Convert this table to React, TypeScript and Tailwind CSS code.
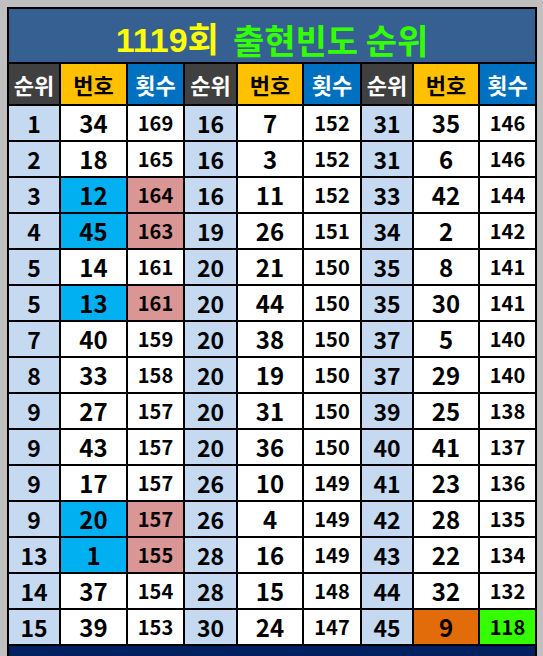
import React from 'react';

type Row = { rank: number; num: number; count: number; hl?: boolean; last?: boolean };

const groups: Row[][] = [
  [
    { rank: 1, num: 34, count: 169 },
    { rank: 2, num: 18, count: 165 },
    { rank: 3, num: 12, count: 164, hl: true },
    { rank: 4, num: 45, count: 163, hl: true },
    { rank: 5, num: 14, count: 161 },
    { rank: 5, num: 13, count: 161, hl: true },
    { rank: 7, num: 40, count: 159 },
    { rank: 8, num: 33, count: 158 },
    { rank: 9, num: 27, count: 157 },
    { rank: 9, num: 43, count: 157 },
    { rank: 9, num: 17, count: 157 },
    { rank: 9, num: 20, count: 157, hl: true },
    { rank: 13, num: 1, count: 155, hl: true },
    { rank: 14, num: 37, count: 154 },
    { rank: 15, num: 39, count: 153 },
  ],
  [
    { rank: 16, num: 7, count: 152 },
    { rank: 16, num: 3, count: 152 },
    { rank: 16, num: 11, count: 152 },
    { rank: 19, num: 26, count: 151 },
    { rank: 20, num: 21, count: 150 },
    { rank: 20, num: 44, count: 150 },
    { rank: 20, num: 38, count: 150 },
    { rank: 20, num: 19, count: 150 },
    { rank: 20, num: 31, count: 150 },
    { rank: 20, num: 36, count: 150 },
    { rank: 26, num: 10, count: 149 },
    { rank: 26, num: 4, count: 149 },
    { rank: 28, num: 16, count: 149 },
    { rank: 28, num: 15, count: 148 },
    { rank: 30, num: 24, count: 147 },
  ],
  [
    { rank: 31, num: 35, count: 146 },
    { rank: 31, num: 6, count: 146 },
    { rank: 33, num: 42, count: 144 },
    { rank: 34, num: 2, count: 142 },
    { rank: 35, num: 8, count: 141 },
    { rank: 35, num: 30, count: 141 },
    { rank: 37, num: 5, count: 140 },
    { rank: 37, num: 29, count: 140 },
    { rank: 39, num: 25, count: 138 },
    { rank: 40, num: 41, count: 137 },
    { rank: 41, num: 23, count: 136 },
    { rank: 42, num: 28, count: 135 },
    { rank: 43, num: 22, count: 134 },
    { rank: 44, num: 32, count: 132 },
    { rank: 45, num: 9, count: 118, last: true },
  ],
];

const font = { fontFamily: '"Noto Sans CJK KR", "Noto Sans", sans-serif' };

export default function App() {
  return (
    <div className="h-[656px] w-[543px] overflow-hidden bg-[#c0c0c0] pl-[7px] pt-[7px]" style={font}>
      <div className="w-[530px] border-2 border-b-0 border-black bg-black">
        {/* Title */}
        <div className="flex h-[53px] items-center justify-center bg-[#366092] pt-[9px] text-[34px] font-bold leading-none">
          <span className="text-[#ffff00]" style={{ fontFamily: '"Liberation Sans", "Noto Sans CJK KR", sans-serif' }}>
            1119회
          </span>
          <span className="ml-[14px] text-[#33ff00]">출현빈도 순위</span>
        </div>

        <div className="grid grid-cols-[50px_65px_55px_51px_64px_56px_50px_64px_55px] gap-[2px] pt-[2px]">
          {/* Header */}
          {[0, 1, 2].map((g) => (
            <React.Fragment key={g}>
              <div className="flex h-[40px] items-center justify-center bg-[#404040] text-[22px] font-bold text-white">순위</div>
              <div className="flex h-[40px] items-center justify-center bg-[#ffc000] text-[22px] font-bold text-black">번호</div>
              <div className="flex h-[40px] items-center justify-center bg-[#0070c0] text-[22px] font-bold text-white">횟수</div>
            </React.Fragment>
          ))}

          {/* Rows */}
          {groups[0].map((_, i) => (
            <React.Fragment key={i}>
              {groups.map((grp, g) => {
                const r = grp[i];
                return (
                  <React.Fragment key={g}>
                    <div className="flex h-[34px] items-center justify-center bg-[#c5d9f1] text-[23px] font-bold text-black">
                      {r.rank}
                    </div>
                    <div
                      className={`flex h-[34px] items-center justify-center text-[24px] font-bold text-black ${
                        r.last ? 'bg-[#e26b0a]' : r.hl ? 'bg-[#00b0f0]' : 'bg-white'
                      }`}
                    >
                      {r.num}
                    </div>
                    <div
                      className={`flex h-[34px] items-center justify-center text-[20px] font-bold text-black ${
                        r.last ? 'bg-[#33ff00]' : r.hl ? 'bg-[#da9694]' : 'bg-white'
                      }`}
                    >
                      {r.count}
                    </div>
                  </React.Fragment>
                );
              })}
            </React.Fragment>
          ))}

          {/* bottom band */}
          <div className="col-span-9 h-[10px] bg-[#002060]" />
        </div>
      </div>
    </div>
  );
}
